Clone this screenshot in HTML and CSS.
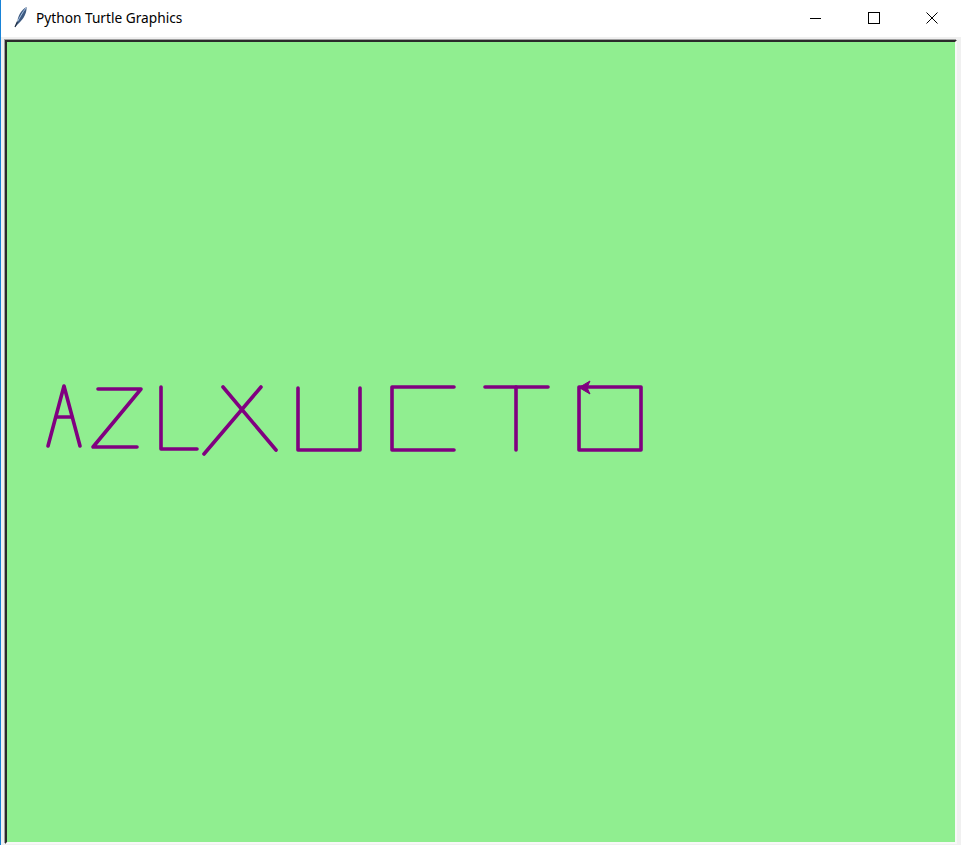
FILE: index.html
```html
<!DOCTYPE html>
<html>
<head>
<meta charset="utf-8">
<title>Python Turtle Graphics</title>
<link rel="stylesheet" href="styles.css">
</head>
<body>
<div class="window">
  <div class="titlebar">
    <div class="title-left">
      <svg class="app-icon" width="14" height="22" viewBox="0 0 14 22">
        <path d="M1 21 L3.5 15 C4 10 7 4 12.5 1 C13 5 11 11 6.5 15.5 Z" fill="#3d5a80"/>
        <path d="M3 16.5 C5.5 12 8.5 6 12 2" stroke="#a9c4e6" stroke-width="1" fill="none"/>
        <path d="M1 21 L3.5 15.5" stroke="#1d2b40" stroke-width="1.2"/>
      </svg>
      <span class="title-text">Python Turtle Graphics</span>
    </div>
    <div class="controls">
      <div class="ctl">
        <svg width="12" height="12" viewBox="0 0 12 12"><path d="M0 6.5 H11" stroke="#000" stroke-width="1"/></svg>
      </div>
      <div class="ctl">
        <svg width="12" height="12" viewBox="0 0 12 12"><rect x="0.5" y="0.5" width="11" height="11" fill="none" stroke="#000" stroke-width="1"/></svg>
      </div>
      <div class="ctl">
        <svg width="12" height="12" viewBox="0 0 12 12"><path d="M0.5 0.5 L11.5 11.5 M11.5 0.5 L0.5 11.5" stroke="#000" stroke-width="1"/></svg>
      </div>
    </div>
  </div>
  <div class="client">
    <div class="canvas-frame">
      <svg class="canvas" width="948" height="800" viewBox="7 42 948 800">
        <g stroke="#800080" stroke-width="3.6" stroke-linecap="round" stroke-linejoin="round" fill="none">
          <!-- A -->
          <path d="M48 446 L64 386 L80 446"/>
          <path d="M57 417 L72 417"/>
          <!-- Z -->
          <path d="M98 389 L141 389 L93 447 L137 447"/>
          <!-- L -->
          <path d="M161 387 L161 449 L197 449"/>
          <!-- X -->
          <path d="M223 387 L276 450"/>
          <path d="M261 387 L204 454"/>
          <!-- U -->
          <path d="M298 388 L298 450 L360 450 L360 388"/>
          <!-- C -->
          <path d="M454 387 L392 387 L392 450 L454 450"/>
          <!-- T -->
          <path d="M485 387 L548 387"/>
          <path d="M516 387 L516 450"/>
          <!-- square -->
          <path d="M579 387 L641 387 L641 450 L579 450 Z"/>
        </g>
        <polygon points="579,387.5 590,381 587,387.5 590,394" fill="#800080" stroke="#800080" stroke-width="1" stroke-linejoin="round"/>
      </svg>
    </div>
  </div>
</div>
</body>
</html>
```

FILE: styles.css
```css
html, body {
  margin: 0;
  padding: 0;
  background: #f0f0f0;
}

.window {
  width: 961px;
  height: 845px;
  box-sizing: border-box;
  border-left: 1px solid #1883d7;
  background: #f0f0f0;
  overflow: hidden;
  display: flex;
  flex-direction: column;
}

.titlebar {
  height: 37px;
  background: #ffffff;
  display: flex;
  align-items: flex-start;
  justify-content: space-between;
  flex-shrink: 0;
}

.title-left {
  display: flex;
  align-items: center;
  height: 35px;
  padding-left: 13px;
}

.app-icon {
  display: block;
  margin-top: -1px;
}

.title-text {
  margin-left: 8px;
  font-family: "Noto Sans", "Open Sans", sans-serif;
  font-size: 13.7px;
  color: #000000;
  margin-top: -1px;
}

.controls {
  display: flex;
  height: 36px;
}

.ctl {
  width: 58px;
  height: 36px;
  display: flex;
  align-items: center;
  justify-content: center;
  padding-bottom: 1px;
  box-sizing: border-box;
}

.ctl svg {
  display: block;
}

.client {
  flex: 1;
  padding: 3px 0 0 4px;
  background: #f0f0f0;
}

.canvas-frame {
  width: 948px;
  height: 800px;
  border-top: 2px solid #2a2a2a;
  border-left: 2px solid #2a2a2a;
  border-right: 2px solid #f8f8f8;
  border-bottom: 2px solid #f8f8f8;
  background: #90ee90;
  box-shadow: -1px -1px 0 #a0a0a0;
}

.canvas {
  display: block;
  background: #90ee90;
}
```
